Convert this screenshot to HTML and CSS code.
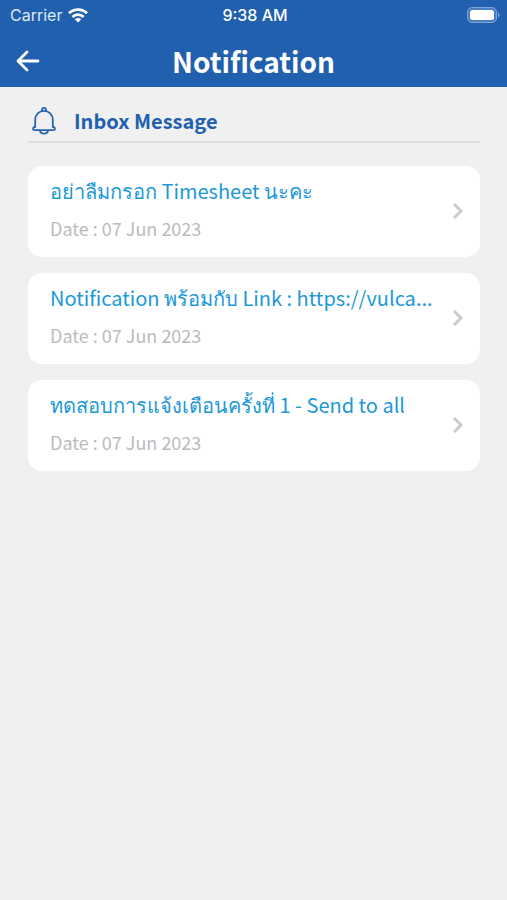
FILE: index.html
```html
<!DOCTYPE html>
<html lang="th">

<head>
  <meta charset="UTF-8">
  <meta name="viewport" content="width=device-width, initial-scale=1.0">
  <title>Notification</title>
  <link rel="stylesheet" href="styles.css">
</head>

<body>

  <header class="header">
    <div class="status">
      <div class="carrier">
        <span>Carrier</span>
        <svg class="wifi" viewBox="0 0 20 15" width="20" height="15">
          <g fill="none" stroke="#fff" stroke-width="2.8">
            <path d="M1 5.3a13 13 0 0 1 18 0"/>
            <path d="M4.4 8.9a8 8 0 0 1 11.2 0"/>
          </g>
          <path d="M6.8 11.3a4.6 4.6 0 0 1 6.4 0L10 14.6z" fill="#fff"/>
        </svg>
      </div>
      <span class="time">9:38 AM</span>
      <svg class="battery" viewBox="0 0 33 16" width="33" height="16">
        <rect x=".5" y=".5" width="29" height="15" rx="4.5" fill="#4a7fc0" stroke="#7fa5d6"/>
        <rect x="3" y="3" width="24" height="10" rx="2.5" fill="#fff"/>
        <path d="M31 5.5c2 .8 2 4.2 0 5z" fill="#7fa5d6"/>
      </svg>
    </div>
    <div class="nav">
      <button class="back" type="button" aria-label="Back">
        <svg viewBox="0 0 24 22" width="24" height="22">
          <path d="M11 2L2 11l9 9M2 11h20" fill="none" stroke="#fff" stroke-width="2.8" stroke-linecap="round" stroke-linejoin="round"/>
        </svg>
      </button>
      <h1>Notification</h1>
    </div>
  </header>

  <main class="content">
    <div class="inbox">
      <svg class="bell" viewBox="0 0 24 28" width="24" height="28">
        <g fill="none" stroke="#2966b0" stroke-width="1.8" stroke-linecap="round" stroke-linejoin="round">
          <path d="M10 3.6V2.8a2 2 0 0 1 4 0v.8"/>
          <path d="M3.2 20v-7.4a8.8 8.8 0 0 1 17.6 0V20"/>
          <path d="M3.2 19.6c-1.4.4-2.2 1-2.2 2s.8 1.6 2 1.6h18c1.2 0 2-.6 2-1.6s-.8-1.6-2.2-2"/>
          <path d="M8 23.4c.3 4.3 7.7 4.3 8 0"/>
        </g>
      </svg>
      <h2>Inbox Message</h2>
    </div>

    <ul class="list">
      <li>
        <a class="item" href="#">
          <div class="text">
            <p class="title">อย่าลืมกรอก Timesheet นะคะ</p>
            <p class="date">Date : 07 Jun 2023</p>
          </div>
          <svg class="arrow" viewBox="0 0 12 18" width="12" height="18">
            <path d="M2 2l7 7-7 7" fill="none" stroke="#ccc" stroke-width="3"/>
          </svg>
        </a>
      </li>
      <li>
        <a class="item" href="#">
          <div class="text">
            <p class="title">Notification พร้อมกับ Link : https://vulca...</p>
            <p class="date">Date : 07 Jun 2023</p>
          </div>
          <svg class="arrow" viewBox="0 0 12 18" width="12" height="18">
            <path d="M2 2l7 7-7 7" fill="none" stroke="#ccc" stroke-width="3"/>
          </svg>
        </a>
      </li>
      <li>
        <a class="item" href="#">
          <div class="text">
            <p class="title">ทดสอบการแจ้งเตือนครั้งที่ 1 - Send to all</p>
            <p class="date">Date : 07 Jun 2023</p>
          </div>
          <svg class="arrow" viewBox="0 0 12 18" width="12" height="18">
            <path d="M2 2l7 7-7 7" fill="none" stroke="#ccc" stroke-width="3"/>
          </svg>
        </a>
      </li>
    </ul>
  </main>

</body>

</html>
```

FILE: styles.css
```css
* {
  margin: 0;
  padding: 0;
  box-sizing: border-box;
}

body {
  background-color: #f0f0f0;
  font-family: "Noto Sans CJK SC", "Noto Sans", sans-serif;
}

svg {
  display: block;
  flex: none;
}

.header {
  background-color: #2060ae;
  color: #fff;
}

.status {
  display: grid;
  grid-template-columns: 1fr auto 1fr;
  align-items: center;
  height: 30px;
  padding: 0 7px 0 10px;
  font-family: Inter, sans-serif;
  font-size: 16px;
}

.carrier {
  display: flex;
  align-items: center;
  gap: 6px;
  color: #dfe9f5;
}

.time {
  font-weight: 500;
}

.battery {
  justify-self: end;
}

.nav {
  display: grid;
  grid-template-columns: 40px 1fr 40px;
  align-items: center;
  height: 57px;
  padding: 4px 16px 0;
}

.back {
  border: 0;
  background: none;
  cursor: pointer;
}

.nav h1 {
  font-size: 28px;
  line-height: 40px;
  text-align: center;
}

.content {
  padding: 16px 27px 16px 28px;
}

.inbox {
  display: flex;
  align-items: center;
  gap: 18px;
  height: 40px;
  padding: 0 4px 2px;
  border-bottom: 2px solid #dcdcdc;
}

.inbox h2 {
  color: #2060ae;
  font-size: 20px;
  line-height: 32px;
}

.list {
  display: flex;
  flex-direction: column;
  gap: 16px;
  margin-top: 23px;
  list-style: none;
}

.item {
  display: flex;
  align-items: center;
  gap: 8px;
  padding: 7px 16px 9px 22px;
  border-radius: 14px;
  background-color: #fff;
  text-decoration: none;
}

.text {
  flex: 1;
  min-width: 0;
}

.title {
  color: #1b98d8;
  font-size: 20px;
  line-height: 36px;
  white-space: nowrap;
}

.date {
  color: #bbb;
  font-size: 18px;
  line-height: 39px;
}
```
